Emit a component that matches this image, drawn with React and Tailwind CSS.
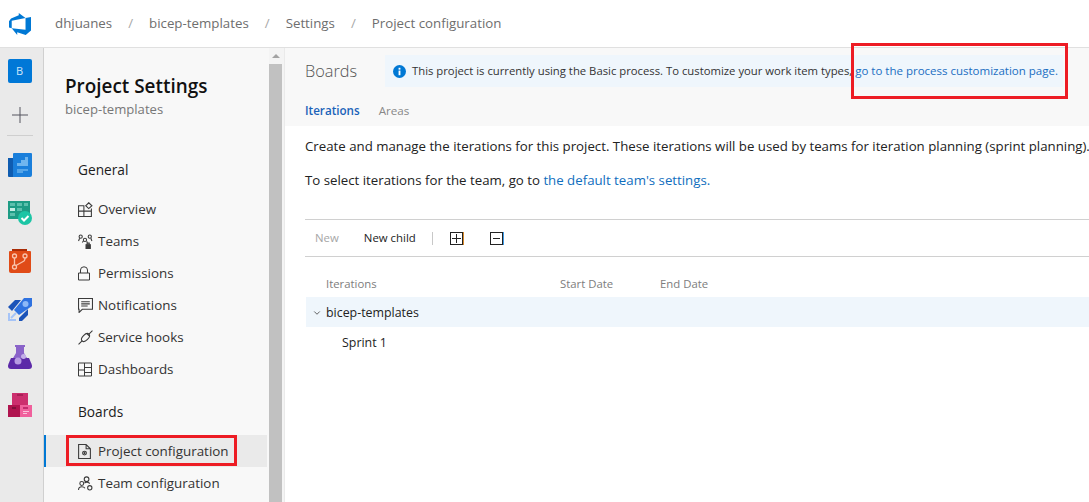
import { ChevronDown } from 'lucide-react';

const FONT = { fontFamily: '"Open Sans", "Noto Sans", sans-serif' };

function Logo() {
  return (
    <svg width="22" height="22" viewBox="0 0 24 24">
      <path fill="#0078d4" d="M0 8.877 2.247 5.91l8.405-3.416V.022l7.37 5.393L2.966 8.338v8.225L0 15.707zm24-4.45v14.651l-5.753 4.9-9.303-3.057v3.056l-5.978-7.416 15.057 1.798V5.415z" />
    </svg>
  );
}

function BoardsIcon() {
  return (
    <svg width="24" height="24" viewBox="0 0 24 24">
      <path fill="#0f5cb0" d="M0 5h8v19H1a1 1 0 0 1-1-1z" />
      <path fill="#1a7fdb" d="M5 1a1 1 0 0 1 1-1h17a1 1 0 0 1 1 1v21a2 2 0 0 1-2 2H5z" />
      <path fill="#6fb5ee" d="M9 10h4V7h4V4h3v9H9z" />
      <path fill="#6fb5ee" d="M9 16h11v2h-5v2H9z" opacity="0.7" />
    </svg>
  );
}

function ReposCheckIcon() {
  return (
    <svg width="24" height="24" viewBox="0 0 24 24">
      <rect x="0" y="0" width="22" height="18" fill="#1e9c85" />
      <rect x="2" y="2" width="5" height="3" fill="#5cc0ad" />
      <rect x="9" y="2" width="5" height="3" fill="#5cc0ad" />
      <rect x="16" y="2" width="4" height="3" fill="#5cc0ad" />
      <rect x="2" y="7" width="5" height="3" fill="#c5ede4" />
      <rect x="9" y="7" width="5" height="3" fill="#5cc0ad" />
      <rect x="2" y="12" width="5" height="3" fill="#5cc0ad" />
      <circle cx="17" cy="17" r="7" fill="#1cc5a5" />
      <path d="M13.5 17l2.500 2.500 4.500-4.500" stroke="#fff" strokeWidth="2" fill="none" />
    </svg>
  );
}

function GitIcon() {
  return (
    <svg width="24" height="24" viewBox="0 0 24 24">
      <path fill="#a92c06" d="M4 0h15v3H4z" />
      <path fill="#e04b17" d="M1 3a1 1 0 0 1 1-1h20a1 1 0 0 1 1 1v19a2 2 0 0 1-2 2H3a2 2 0 0 1-2-2z" />
      <g stroke="#f9c3ac" strokeWidth="1.3" fill="none">
        <circle cx="6.5" cy="7" r="2" />
        <circle cx="17" cy="7" r="2" />
        <circle cx="6.5" cy="18" r="2" />
        <path d="M6.5 9v7M8 16.500l8-4.500c1-1 1-2 1-3" />
      </g>
    </svg>
  );
}

function RocketIcon() {
  return (
    <svg width="24" height="24" viewBox="0 0 24 24">
      <path fill="#1a52b8" d="M0 10 7 3h6L4 14z" />
      <path fill="#1a52b8" d="M11 21l9-9v6l-6 6h-3z" />
      <path fill="#2f72e0" d="M6 13 16 1h8v8L11 18z" />
      <circle cx="17.500" cy="7" r="3" fill="#8db8f7" />
      <path fill="#a6c4f7" d="M0 16h2v6h6v2H0z" />
      <path stroke="#a6c4f7" strokeWidth="2" d="M3 21l5-5" />
    </svg>
  );
}

function FlaskIcon() {
  return (
    <svg width="24" height="24" viewBox="0 0 24 24">
      <path fill="#8a63c9" d="M7 0h10v2h-1v6l7 12H1l7-12V2H7z" />
      <path fill="#5c2aa8" d="M0 21c0-1 2-6 3-8h18c1 2 3 7 3 8a3 3 0 0 1-3 3H3a3 3 0 0 1-3-3z" />
      <circle cx="10" cy="16" r="3.500" fill="#b79be2" />
      <circle cx="15.500" cy="11.500" r="2.500" fill="#c4afe8" />
    </svg>
  );
}

function PackagesIcon() {
  return (
    <svg width="24" height="24" viewBox="0 0 24 24">
      <rect x="4" y="0" width="16" height="12" fill="#cc2f6e" />
      <rect x="9" y="1" width="6" height="2" fill="#a81f56" />
      <rect x="0" y="12" width="12" height="12" fill="#b0144f" />
      <rect x="12" y="12" width="12" height="12" fill="#f0609c" />
      <rect x="4" y="14" width="4" height="2" fill="#80103c" />
      <rect x="15" y="14" width="5" height="2" fill="#c22c6e" />
      <rect x="15" y="18" width="6" height="1" fill="#fac1da" />
      <rect x="15" y="20" width="4" height="1" fill="#fac1da" />
    </svg>
  );
}

const NAV_ICON = { width: 14, height: 14, viewBox: '0 0 14 14', fill: 'none', stroke: '#3b3b3b', strokeWidth: 1 };

function OverviewIcon() {
  return (
    <svg {...NAV_ICON} width="15" height="15">
      <path d="M.5 3.500h5v10h-5zM.5 8.500h12v5h-7M5.500 3.500v5h7V6" />
      <path d="M10 .7 13 3.500 10 6.200 7.200 3.500z" />
    </svg>
  );
}

function TeamsIcon() {
  return (
    <svg {...NAV_ICON} width="15" height="15">
      <circle cx="2.500" cy="2.500" r="1.500" />
      <circle cx="11" cy="2.500" r="1.500" />
      <circle cx="6.500" cy="5.500" r="1.500" />
      <path d="M.5 6.500 1.500 4M13 6.500 12 4M4 8l1-1.500M9 8 8 7" />
      <rect x="7.500" y="10" width="4" height="3.500" fill="#3b3b3b" />
      <path d="M8.500 10V8.500h2V10" />
    </svg>
  );
}

function LockIcon() {
  return (
    <svg {...NAV_ICON} width="12" height="15" viewBox="0 0 12 14">
      <path d="M.5 6.500h11v7H.5zM2.500 6.500V3.500a3.500 3.200 0 0 1 7 0v3" />
    </svg>
  );
}

function NotifIcon() {
  return (
    <svg {...NAV_ICON} width="15" height="15">
      <path d="M.5.5h13v10H4l-3 3v-3H.5z" />
      <path d="M3 3.500h8M3 5.500h8M3 7.500h6" />
    </svg>
  );
}

function HookIcon() {
  return (
    <svg {...NAV_ICON} width="15" height="15">
      <path d="M13.500.5 10 4M.5 13.500 4 10" />
      <ellipse cx="7" cy="7" rx="4.500" ry="2.600" transform="rotate(-45 7 7)" />
      <path d="M8.500 3.500l2 2" />
    </svg>
  );
}

function DashIcon() {
  return (
    <svg {...NAV_ICON} width="14" height="15">
      <path d="M.5.5h13v13H.5zM6.500.5v13M.5 7.500h6M6.500 5h7M6.500 10h7" />
    </svg>
  );
}

function ConfigIcon() {
  return (
    <svg {...NAV_ICON} width="13" height="15" viewBox="0 0 12 14">
      <path d="M.5.5h7l4 4v9H.5zM7.500.5v4h4" />
      <circle cx="6" cy="8.500" r="1.800" />
      <circle cx="6" cy="8.500" r="0.500" />
    </svg>
  );
}

function TeamConfigIcon() {
  return (
    <svg {...NAV_ICON} width="15" height="15">
      <circle cx="8" cy="3" r="2.200" />
      <circle cx="3.500" cy="7" r="1.800" />
      <path d="M.5 13c0-2 1-3 3-3s2.500.5 3 1.500M6 6.500c1.500-1 3.500-1 5 .5" />
      <circle cx="11" cy="11" r="2" />
    </svg>
  );
}

const GENERAL = [
  { label: 'Overview', Icon: OverviewIcon },
  { label: 'Teams', Icon: TeamsIcon },
  { label: 'Permissions', Icon: LockIcon },
  { label: 'Notifications', Icon: NotifIcon },
  { label: 'Service hooks', Icon: HookIcon },
  { label: 'Dashboards', Icon: DashIcon },
];

function NavRow({ label, Icon, active }) {
  return (
    <div className={`relative mr-[2px] flex h-8 items-center pl-[34px] text-[13.4px] text-[#333] ${active ? 'bg-[#eaeaea]' : ''}`}>
      {active && <div className="absolute left-0 top-0 h-full w-[2px] bg-[#0078d4]" />}
      <div className="flex w-5 justify-start">
        <Icon />
      </div>
      {label}
    </div>
  );
}

export default function App() {
  return (
    <div style={FONT} className="flex h-[502px] w-[1089px] flex-col overflow-hidden bg-white">
      <header className="flex h-12 shrink-0 items-center border-b border-[#e0e0e0] text-[13.3px] text-[#6e6e6e]">
        <div className="flex w-[55px] justify-center pr-[15px]">
          <Logo />
        </div>
        <span>dhjuanes</span>
        <span className="mx-[16px] text-[#a8a8a8]">/</span>
        <span>bicep-templates</span>
        <span className="mx-[16px] text-[#a8a8a8]">/</span>
        <span>Settings</span>
        <span className="mx-[16px] text-[#a8a8a8]">/</span>
        <span>Project configuration</span>
      </header>

      <div className="flex min-h-0 flex-1">
        <aside className="flex w-11 shrink-0 flex-col items-center border-r border-[#d0d0d0] bg-[#eaeaea] pr-[4px] pt-[11px]">
          <div className="flex h-6 w-6 items-center justify-center rounded-[2px] bg-[#0078d7] text-[11px] text-[#cfe6fa]">B</div>
          <div className="mt-[24px] text-[#55555f]">
            <svg width="16" height="16" viewBox="0 0 16 16" stroke="currentColor" strokeWidth="1">
              <path d="M0 8h16M8 0v16" />
            </svg>
          </div>
          <div className="mt-[12px] h-px w-[26px] bg-[#cfcfcf]" />
          <div className="mt-[17px] flex flex-col gap-6 [&>svg]:block">
            <BoardsIcon />
            <ReposCheckIcon />
            <GitIcon />
            <RocketIcon />
            <FlaskIcon />
            <PackagesIcon />
          </div>
        </aside>

        <nav className="w-[225px] shrink-0 bg-[#f8f8f8]">
          <div className="pl-[21px] pt-[25px]">
            <h1 className="text-[18.9px] font-semibold leading-[27px] text-[#111]">Project Settings</h1>
            <p className="text-[13.1px] leading-[19px] text-[#777]">bicep-templates</p>
          </div>
          <h2 className="mt-[40px] pl-[34px] text-[13.7px] font-medium leading-[22px] text-[#1c1c1c]">General</h2>
          <div className="mt-[12px]">
            {GENERAL.map((item) => (
              <NavRow key={item.label} {...item} />
            ))}
          </div>
          <h2 className="mt-[16px] pl-[34px] text-[13.7px] font-medium leading-[22px] text-[#1c1c1c]">Boards</h2>
          <div className="mt-[12px]">
            <NavRow label="Project configuration" Icon={ConfigIcon} active />
            <NavRow label="Team configuration" Icon={TeamConfigIcon} />
          </div>
        </nav>

        <div className="flex w-4 shrink-0 flex-col border-r border-[#eaeaea] bg-[#f4f4f4]">
          <div className="flex h-4 items-center justify-center pr-[2px]">
            <div className="h-0 w-0 border-x-[4px] border-b-[4px] border-x-transparent border-b-[#a3a3a3]" />
          </div>
          <div className="mr-[2px] flex-1 bg-[#c1c1c1]" />
        </div>

        <main className="min-w-0 flex-1">
          <div className="h-[78px] bg-[#f8f8f8] pl-5 pt-[7px]">
            <div className="flex items-center">
              <h2 className="w-[80px] text-[16.3px] font-light leading-8 text-[#555]">Boards</h2>
              <div className="flex h-8 w-[678px] items-center bg-[#eff6fc] pl-2 text-[11.3px] text-[#333]">
                <svg className="mr-[6px] shrink-0" width="13" height="13" viewBox="0 0 14 14">
                  <circle cx="7" cy="7" r="7" fill="#0078d4" />
                  <rect x="6" y="6" width="2" height="5" fill="#fff" />
                  <rect x="6" y="3" width="2" height="2" fill="#fff" />
                </svg>
                <span className="whitespace-nowrap">
                  This project is currently using the Basic process. To customize your work item types, <span className="text-[11.5px] text-[#1a6ec2]">go to the process customization page.</span>
                </span>
              </div>
            </div>
            <div className="mt-[14px] flex gap-[19px] text-[11.65px] leading-5">
              <span className="font-semibold text-[#1a62b8]">Iterations</span>
              <span className="text-[#888]">Areas</span>
            </div>
          </div>

          <div className="pl-5">
            <p className="mt-[10px] whitespace-nowrap text-[13.25px] leading-5 text-[#222]">
              Create and manage the iterations for this project. These iterations will be used by teams for iteration planning (sprint planning).
            </p>
            <p className="mt-[14px] whitespace-nowrap text-[13.25px] leading-5 text-[#222]">
              To select iterations for the team, go to <span className="text-[#106ebe]">the default team's settings.</span>
            </p>

            <div className="mt-[29px] flex h-[38px] items-center border-y border-[#d0d0d0] text-[11.4px]">
              <span className="ml-[10px] text-[#a6a6a6]">New</span>
              <span className="ml-[25px] text-[#222]">New child</span>
              <div className="ml-[16px] h-[13px] w-px bg-[#c8c8c8]" />
              <div className="ml-[17px] flex h-[13px] w-[13px] items-center justify-center border border-[#222] [box-shadow:1px_0_0_#d68a2c]">
                <svg width="9" height="9" viewBox="0 0 9 9" stroke="#222" strokeWidth="1"><path d="M0 4.500h9M4.500 0v9" /></svg>
              </div>
              <div className="ml-[27px] flex h-[13px] w-[13px] items-center justify-center border border-[#222] [box-shadow:1px_0_0_#3d9be8]">
                <svg width="9" height="9" viewBox="0 0 9 9" stroke="#222" strokeWidth="1"><path d="M1 4.500h7" /></svg>
              </div>
            </div>

            <div className="mt-[17px] flex h-5 items-center text-[11.35px] text-[#7d7d7d]">
              <span className="ml-[21px] w-[234px]">Iterations</span>
              <span className="w-[100px]">Start Date</span>
              <span>End Date</span>
            </div>
            <div className="ml-px mt-[3px] flex h-[30px] items-center bg-[#eff6fc] pt-[2px] text-[12.4px] text-[#222]">
              <ChevronDown className="ml-[6px] mr-[4px] h-[10px] w-[10px] text-[#444]" />
              bicep-templates
            </div>
            <div className="flex h-[30px] items-center pl-[37px] pt-[2px] text-[12.4px] text-[#222]">Sprint 1</div>
          </div>
        </main>
      </div>

      <div className="pointer-events-none absolute left-[66px] top-[435px] h-[31px] w-[171px] border-[3px] border-[#ed1c24]" />
      <div className="pointer-events-none absolute left-[851px] top-[43px] h-[56px] w-[217px] border-[3px] border-[#ed1c24]" />
    </div>
  );
}
